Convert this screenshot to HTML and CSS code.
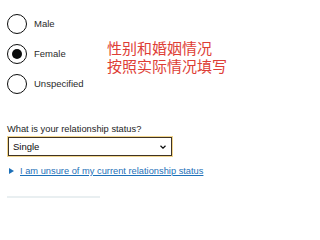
FILE: index.html
```html
<!DOCTYPE html>
<html lang="en">
<head>
<meta charset="utf-8">
<link rel="stylesheet" href="styles.css">
</head>
<body>
<div class="page">
  <div class="radios">
    <div class="radio"><span class="circle"></span><span class="rlabel">Male</span></div>
    <div class="radio"><span class="circle checked"></span><span class="rlabel">Female</span></div>
    <div class="radio"><span class="circle"></span><span class="rlabel">Unspecified</span></div>
  </div>
  <div class="note"><div>性别和婚姻情况</div><div>按照实际情况填写</div></div>
  <div class="flabel">What is your relationship status?</div>
  <div class="select"><span>Single</span><svg class="chev" width="6" height="4" viewBox="0 0 6 4"><path d="M0.5 0.8 L3 3.2 L5.5 0.8" fill="none" stroke="#0b0c0c" stroke-width="1.2"/></svg></div>
  <div class="details"><span class="tri"></span><a class="link">I am unsure of my current relationship status</a></div>
  <div class="btnedge"></div>
</div>
</body>
</html>
```
FILE: styles.css
```css
html, body { margin: 0; padding: 0; background: #fff; }
body { font-family: "Liberation Sans", Arial, sans-serif; color: #0b0c0c; }
.page { position: relative; width: 320px; height: 200px; overflow: hidden; padding: 14px 0 0 7px; box-sizing: border-box; }
.radios { display: flex; flex-direction: column; gap: 10px; }
.radio { display: flex; align-items: center; gap: 7px; height: 20px; }
.circle { width: 20px; height: 20px; box-sizing: border-box; border: 1.6px solid #0b0c0c; border-radius: 50%; display: flex; align-items: center; justify-content: center; }
.circle.checked::after { content: ""; width: 10px; height: 10px; border-radius: 50%; background: #0b0c0c; }
.rlabel { font-size: 9.5px; line-height: 12px; color: #2a2a2a; }
.note { position: absolute; left: 107px; top: 40px; font-family: "Noto Sans CJK SC", sans-serif; font-size: 15px; line-height: 18px; color: #de3e36; }
.note div { height: 18px; line-height: 15px; margin-bottom: 0; }
.flabel { margin-top: 29px; font-size: 9.3px; line-height: 12px; color: #1e1e1e; }
.select { margin: 2px 0 0 1px; width: 164px; height: 19px; box-sizing: border-box; border: 1.6px solid #3f3324; box-shadow: 0 0 0 1px #f2d68e; display: flex; align-items: center; justify-content: space-between; padding: 0 5px 0 4px; font-size: 9.5px; }
.chev { margin-top: 1px; }
.details { margin-top: 9px; display: flex; align-items: center; gap: 6px; height: 12px; padding-left: 2px; }
.tri { width: 0; height: 0; border-left: 5px solid #1d70b8; border-top: 3.5px solid transparent; border-bottom: 3.5px solid transparent; }
.link { font-size: 9.3px; line-height: 12px; color: #1d70b8; text-decoration: underline; text-underline-offset: 1px; }
.btnedge { margin-top: 19px; width: 93px; height: 2px; background: #e9eff1; }
```
